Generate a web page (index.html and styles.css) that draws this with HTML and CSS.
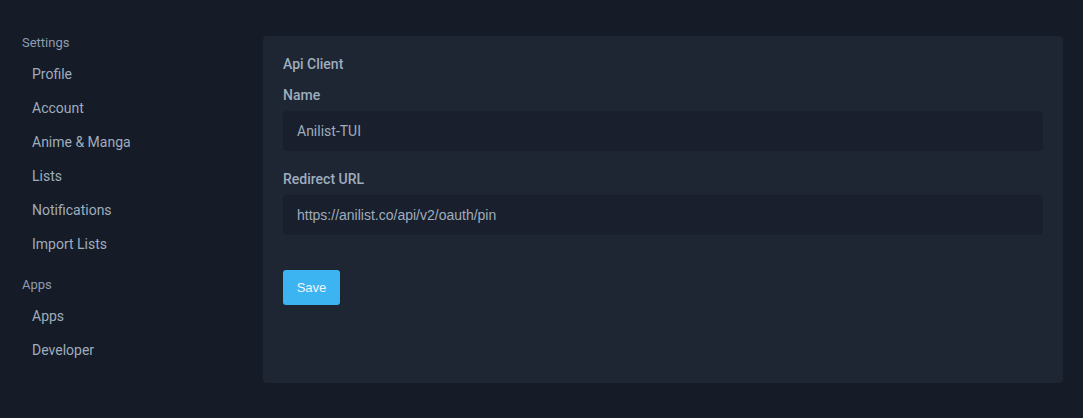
FILE: index.html
```html
<!DOCTYPE html>
<html lang="en">
<head>
<meta charset="utf-8">
<title>Settings - Developer</title>
<link rel="stylesheet" href="styles.css">
</head>
<body>
<div class="page">
  <nav class="sidebar">
    <div class="group">
      <div class="group-title">Settings</div>
      <a class="link" href="#">Profile</a>
      <a class="link" href="#">Account</a>
      <a class="link" href="#">Anime &amp; Manga</a>
      <a class="link" href="#">Lists</a>
      <a class="link" href="#">Notifications</a>
      <a class="link" href="#">Import Lists</a>
    </div>
    <div class="group">
      <div class="group-title">Apps</div>
      <a class="link" href="#">Apps</a>
      <a class="link" href="#">Developer</a>
    </div>
  </nav>
  <main class="panel">
    <div class="panel-title">Api Client</div>
    <div class="field">
      <label class="label">Name</label>
      <div class="input">Anilist-TUI</div>
    </div>
    <div class="field">
      <label class="label">Redirect URL</label>
      <div class="input url">https://anilist.co/api/v2/oauth/pin</div>
    </div>
    <div class="actions">
      <button class="save" type="button">Save</button>
    </div>
  </main>
</div>
</body>
</html>
```
FILE: styles.css
```css
* { box-sizing: border-box; }
html, body {
  margin: 0;
  padding: 0;
  background: #151b27;
  height: 100%;
}
body {
  font-family: Roboto, "Liberation Sans", sans-serif;
  color: #9fadbd;
}
.page {
  display: grid;
  grid-template-columns: 241px 1fr;
  padding: 35px 20px 35px 22px;
  height: 418px;
}
.sidebar {
  display: flex;
  flex-direction: column;
  gap: 16px;
}
.group {
  display: flex;
  flex-direction: column;
}
.group-title {
  font-size: 13px;
  line-height: 15px;
  margin-bottom: 7px;
  color: #8f9db0;
}
.link {
  display: block;
  padding-left: 10px;
  font-size: 14px;
  line-height: 34px;
  height: 34px;
  color: #9fadbd;
  text-decoration: none;
}
.panel {
  margin-top: 1px;
  background: #1e2533;
  border-radius: 4px;
  padding: 20px;
  display: flex;
  flex-direction: column;
}
.panel-title {
  font-size: 14px;
  font-weight: 500;
  line-height: 17px;
  margin-bottom: 14px;
}
.field {
  display: flex;
  flex-direction: column;
  margin-bottom: 20px;
}
.label {
  font-size: 14px;
  font-weight: 500;
  line-height: 17px;
  margin-bottom: 7px;
}
.input {
  height: 40px;
  border-radius: 4px;
  background: #191f2c;
  padding: 0 14px;
  display: flex;
  align-items: center;
  font-size: 14px;
  color: #9fadbd;
}
.url {
  font-family: "Liberation Sans", Arial, sans-serif;
}
.actions {
  margin-top: 15px;
}
.save {
  width: 57px;
  height: 35px;
  border: 0;
  border-radius: 3px;
  background: #3db4f2;
  color: #f0f6fb;
  font-family: "Liberation Sans", Arial, sans-serif;
  font-size: 13px;
  padding: 0;
  cursor: pointer;
}
```
